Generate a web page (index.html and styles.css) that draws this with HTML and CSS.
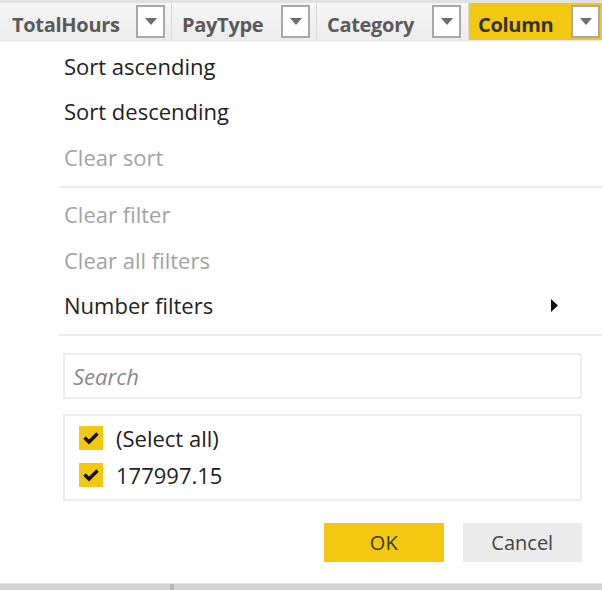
FILE: index.html
```html
<!DOCTYPE html>
<html>
<head>
<meta charset="utf-8">
<link rel="stylesheet" href="styles.css">
</head>
<body>
<div class="header">
  <div class="cell c1"><span class="title">TotalHours</span><span class="drop"><svg width="12" height="7" viewBox="0 0 12 7"><path d="M0 0H12L6 7Z" fill="#6e6e6e"/></svg></span></div>
  <div class="cell c2"><span class="title">PayType</span><span class="drop"><svg width="12" height="7" viewBox="0 0 12 7"><path d="M0 0H12L6 7Z" fill="#6e6e6e"/></svg></span></div>
  <div class="cell c3"><span class="title">Category</span><span class="drop"><svg width="12" height="7" viewBox="0 0 12 7"><path d="M0 0H12L6 7Z" fill="#6e6e6e"/></svg></span></div>
  <div class="cell c4 active"><span class="title">Column</span><span class="drop"><svg width="12" height="7" viewBox="0 0 12 7"><path d="M0 0H12L6 7Z" fill="#6e6e6e"/></svg></span></div>
</div>
<div class="menu">
  <div class="item">Sort ascending</div>
  <div class="item">Sort descending</div>
  <div class="item disabled">Clear sort</div>
  <div class="divider"></div>
  <div class="item disabled">Clear filter</div>
  <div class="item disabled">Clear all filters</div>
  <div class="item sub">Number filters<svg class="arrow" width="7" height="13" viewBox="0 0 7 13"><path d="M0 0L7 6.5L0 13Z" fill="#111"/></svg></div>
  <div class="divider"></div>
  <div class="search"><span class="placeholder">Search</span></div>
  <div class="list">
    <div class="check"><span class="box"><svg width="18" height="14" viewBox="0 0 18 14"><path d="M2.5 6.5L7 11L15.5 2.5" fill="none" stroke="#111" stroke-width="3.4"/></svg></span>(Select all)</div>
    <div class="check"><span class="box"><svg width="18" height="14" viewBox="0 0 18 14"><path d="M2.5 6.5L7 11L15.5 2.5" fill="none" stroke="#111" stroke-width="3.4"/></svg></span>177997.15</div>
  </div>
  <div class="buttons">
    <div class="btn ok">OK</div>
    <div class="btn cancel">Cancel</div>
  </div>
</div>
<div class="footer"><div class="fcell f1"></div><div class="fcell f2"></div></div>
</body>
</html>
```
FILE: styles.css
```css
html, body {
  margin: 0;
  padding: 0;
  background: #fff;
}
body {
  width: 602px;
  height: 590px;
  overflow: hidden;
  font-family: "Open Sans", "Noto Sans", sans-serif;
  display: flex;
  flex-direction: column;
}
.header {
  display: flex;
  height: 37px;
  border-top: 3px solid #e2e2e2;
  background: linear-gradient(#f6f6f6, #ececec);
  box-shadow: 0 1px 2px #dcdcdc;
}
.cell {
  display: flex;
  align-items: center;
  justify-content: space-between;
  border-right: 1px solid #dadada;
  box-sizing: border-box;
}
.c1 { width: 172px; padding: 0 6px 0 12px; }
.c2 { width: 145px; padding: 0 6px 0 10px; }
.c3 { width: 152px; padding: 0 7px 0 10px; }
.c4 { width: 133px; padding: 0 2px 0 9px; border-right: none; }
.active { background: #f2c811; }
.title {
  font-weight: 700;
  font-size: 20px;
  color: #5a5a5a;
  letter-spacing: -0.3px;
  padding-top: 5px;
}
.active .title { color: #333; }
.drop {
  width: 29px;
  height: 33px;
  box-sizing: border-box;
  border: 2px solid #a9a9a9;
  background: #fff;
  display: flex;
  align-items: center;
  justify-content: center;
}
.menu {
  flex: 1;
  padding: 3px 20px 0 59px;
  display: flex;
  flex-direction: column;
}
.item {
  height: 45.5px;
  flex: none;
  display: flex;
  align-items: center;
  padding-left: 5px;
  font-size: 22px;
  color: #222;
}
.item.disabled { color: #a3a3a3; }
.sub { justify-content: space-between; padding-right: 24px; }
.divider {
  flex: none;
  height: 2px;
  background: #ebebeb;
  margin: 6px -20px 4px 0;
}
.search {
  flex: none;
  margin: 13px 0 0 4px;
  width: 519px;
  height: 46px;
  box-sizing: border-box;
  border: 2px solid #ececec;
  display: flex;
  align-items: center;
  padding-left: 8px;
}
.placeholder {
  font-style: italic;
  font-size: 22px;
  color: #8a8a8a;
}
.list {
  flex: none;
  margin: 15px 0 0 4px;
  width: 519px;
  height: 87px;
  box-sizing: border-box;
  border: 2px solid #ececec;
  padding: 3px 0 0 14px;
}
.check {
  display: flex;
  align-items: center;
  gap: 13px;
  height: 37px;
  font-size: 22px;
  color: #222;
}
.box {
  width: 24px;
  height: 24px;
  background: #f2c811;
  display: flex;
  align-items: center;
  justify-content: center;
}
.buttons {
  flex: none;
  display: flex;
  gap: 19px;
  margin: 22px 0 0 265px;
}
.btn {
  width: 120px;
  height: 39px;
  display: flex;
  align-items: center;
  justify-content: center;
  font-size: 20px;
}
.ok { background: #f2c811; color: #3a3a3a; }
.cancel { background: #ebebeb; color: #444; }
.footer {
  height: 6px;
  display: flex;
  background: #d4d4d4;
  border-top: 1px solid #e6e6e6;
}
.fcell { height: 100%; border-right: 2px solid #b8b8b8; }
.f1 { width: 170px; }
```
